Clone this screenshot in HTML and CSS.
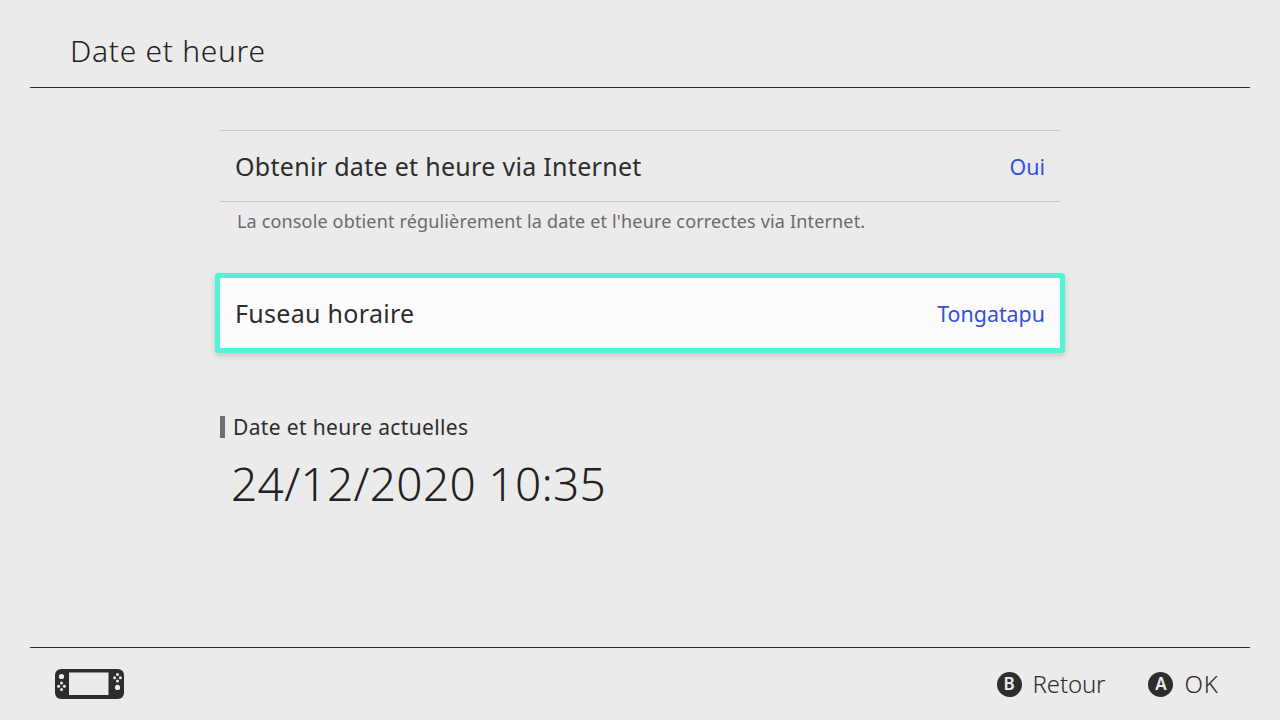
FILE: index.html
```html
<!DOCTYPE html>
<html lang="fr">
<head>
  <meta charset="UTF-8" />
  <title>Date et heure</title>
  <link rel="stylesheet" href="styles.css">
</head>
<body>

<!-- HEADER -->
<header class="top-bar">
  <h1>Date et heure</h1>
</header>

<!-- SETTINGS -->
<main class="settings">
  <div class="row row-first">
    <span class="row-label">Obtenir date et heure via Internet</span>
    <span class="row-value">Oui</span>
  </div>
  <p class="row-help">La console obtient régulièrement la date et l'heure correctes via Internet.</p>

  <div class="row row-selected">
    <span class="row-label">Fuseau horaire</span>
    <span class="row-value">Tongatapu</span>
  </div>

  <h2 class="current-title">Date et heure actuelles</h2>
  <div class="current-value">24/12/2020 10:35</div>
</main>

<!-- FOOTER -->
<footer class="bottom-bar">
  <svg class="console-icon" width="70" height="30" viewBox="0 0 70 30">
    <rect x="0" y="0" width="69" height="30" rx="6" fill="#2d2d2d"/>
    <rect x="14" y="3.500" width="39.500" height="22.500" fill="#ebebeb"/>
    <circle cx="6.500" cy="7.500" r="2.600" fill="#ebebeb"/>
    <circle cx="6.500" cy="14" r="1.500" fill="#ebebeb"/>
    <circle cx="3.600" cy="17.200" r="1.500" fill="#ebebeb"/>
    <circle cx="9.400" cy="17.200" r="1.500" fill="#ebebeb"/>
    <circle cx="6.500" cy="20.400" r="1.500" fill="#ebebeb"/>
    <circle cx="62.500" cy="5.400" r="1.500" fill="#ebebeb"/>
    <circle cx="59.600" cy="8.700" r="1.500" fill="#ebebeb"/>
    <circle cx="65.400" cy="8.700" r="1.500" fill="#ebebeb"/>
    <circle cx="62.500" cy="12" r="1.500" fill="#ebebeb"/>
    <circle cx="62.500" cy="18.400" r="2.600" fill="#ebebeb"/>
  </svg>
  <div class="hints">
    <span class="hint"><span class="hint-btn">B</span>Retour</span>
    <span class="hint hint-ok"><span class="hint-btn">A</span>OK</span>
  </div>
</footer>

</body>
</html>
```

FILE: styles.css
```css
* {
  box-sizing: border-box;
  margin: 0;
  padding: 0;
}
body {
  width: 1280px;
  height: 720px;
  overflow: hidden;
  display: flex;
  flex-direction: column;
  font-family: "Noto Sans", sans-serif;
  background-color: #ebebeb;
  color: #2d2d2d;
}

/* HEADER */
.top-bar {
  height: 88px;
  margin: 0 30px;
  padding: 31px 40px 0;
  border-bottom: 1px solid #2d2d2d;
}
.top-bar h1 {
  font-size: 30px;
  line-height: 40px;
  font-weight: 300;
  letter-spacing: 0.7px;
  color: #222;
}

/* SETTINGS */
.settings {
  flex: 1;
  width: 840px;
  margin: 0 auto;
  padding-top: 42px;
}
.row {
  display: flex;
  justify-content: space-between;
  align-items: center;
  padding: 0 15px;
}
.row-first {
  height: 72px;
  border-top: 1px solid #c8c8c8;
  border-bottom: 1px solid #c8c8c8;
}
.row-label {
  font-size: 25px;
  letter-spacing: 0.3px;
}
.row-value {
  font-size: 21.4px;
  color: #3250e0;
}
.row-help {
  padding: 7px 17px 0;
  font-size: 18px;
  line-height: 25px;
  letter-spacing: 0.16px;
  color: #6a6a6a;
}
.row-selected {
  height: 70px;
  margin-top: 44px;
  background-color: #fcfcfc;
  border-radius: 1px;
  box-shadow: 0 0 0 5px #4ff5d6, 0 3px 6px 5px rgba(0,0,0,0.15);
}
.current-title {
  margin-top: 68px;
  padding-left: 8px;
  border-left: 5px solid #6e6e6e;
  font-size: 21px;
  line-height: 22px;
  font-weight: 400;
  letter-spacing: 0.35px;
}
.current-value {
  margin-top: 15px;
  padding-left: 11px;
  font-size: 46px;
  line-height: 60px;
  font-weight: 300;
  letter-spacing: 0.3px;
  color: #222;
}

/* FOOTER */
.bottom-bar {
  height: 73px;
  margin: 0 30px;
  padding: 0 31px 0 25px;
  border-top: 1px solid #2d2d2d;
  display: flex;
  justify-content: space-between;
  align-items: center;
}
.hints {
  display: flex;
  gap: 43px;
}
.hint {
  display: flex;
  align-items: center;
  gap: 11px;
  font-size: 24px;
  line-height: 30px;
  font-weight: 300;
  letter-spacing: -0.15px;
}
.hint-ok {
  letter-spacing: 1px;
}
.hint-btn {
  width: 25px;
  height: 25px;
  border-radius: 50%;
  background-color: #2d2d2d;
  color: #ebebeb;
  font-size: 17px;
  font-weight: 600;
  letter-spacing: 0;
  display: flex;
  align-items: center;
  justify-content: center;
}
```
